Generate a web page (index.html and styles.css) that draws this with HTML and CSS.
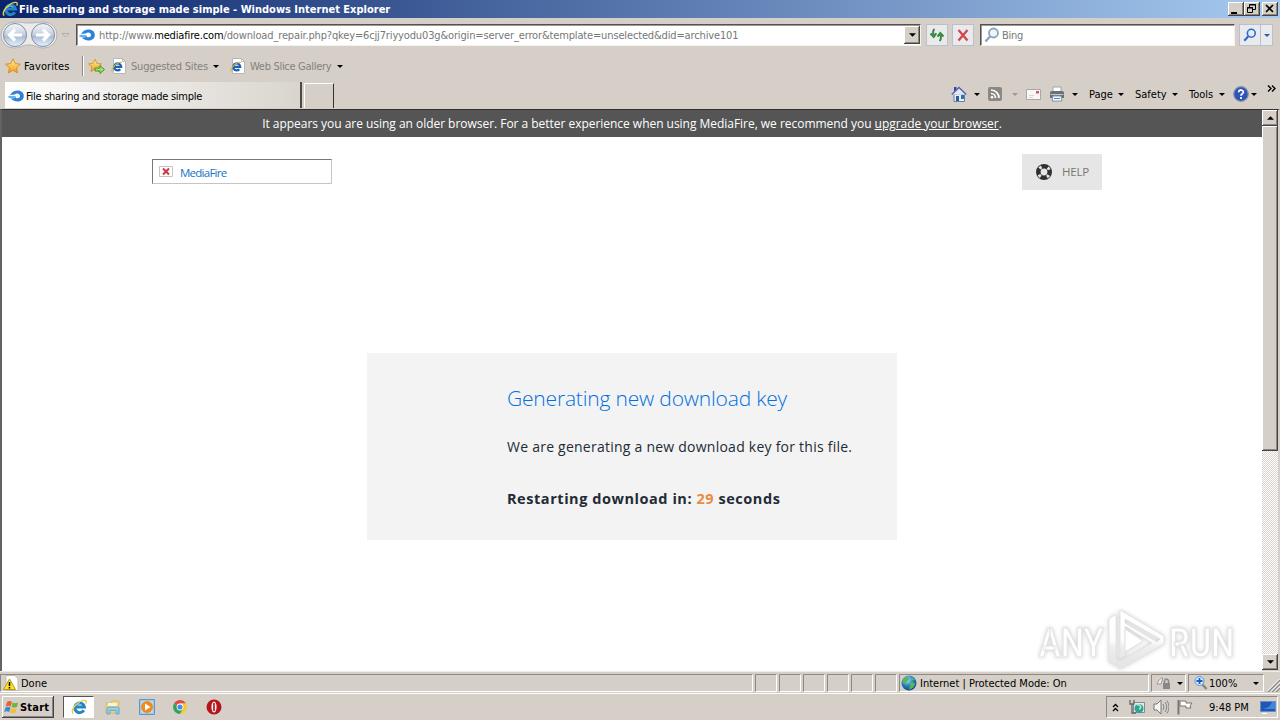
FILE: index.html
```html
<!DOCTYPE html>
<html lang="en">
<head>
  <meta charset="UTF-8">
  <title>File sharing and storage made simple</title>
  <link rel="stylesheet" href="styles.css">
</head>
<body>
  <svg class="defs" width="0" height="0">
    <defs>
      <linearGradient id="orb" x1="0" y1="0" x2="0" y2="1"><stop offset="0" stop-color="#f4f7fa"/><stop offset=".5" stop-color="#c3cfde"/><stop offset=".55" stop-color="#a9bcd2"/><stop offset="1" stop-color="#e6f3fb"/></linearGradient>
      <linearGradient id="gold" x1="0" y1="0" x2="0" y2="1"><stop offset="0" stop-color="#fff2a0"/><stop offset="1" stop-color="#f39a12"/></linearGradient>
      <linearGradient id="mark" gradientUnits="userSpaceOnUse" x1="0" y1="18" x2="0" y2="56"><stop offset="0" stop-color="#fff"/><stop offset=".45" stop-color="#fcfcfc"/><stop offset=".6" stop-color="#eee"/><stop offset="1" stop-color="#e6e6e6"/></linearGradient>
      <radialGradient id="globe" cx=".4" cy=".3" r=".8"><stop offset="0" stop-color="#a8dcf4"/><stop offset=".5" stop-color="#287ec0"/><stop offset="1" stop-color="#123a78"/></radialGradient>
      <symbol id="ie" viewBox="0 0 16 16"><path d="M12.800 11.300a4.800 4.800 0 1 1 .6-3.300H4.500" fill="none" stroke="#2485c6" stroke-width="3"/><path d="M5 6.300q3-3 6 0" fill="none" stroke="#7cc8ee"/><path d="M2.200 14.600C-1.500 11.500 7 1.300 14 1.400c1.700.1 1.500 1.800.7 3.200" fill="none" stroke="#e6cc52" stroke-width="1.400"/></symbol>
      <symbol id="mf" viewBox="0 0 16 12"><path d="M.5 7C3 6.500 5.500 7.500 8 7.500" fill="none" stroke="#62b2ee" stroke-width="2.200"/><path d="M2 4.800C4 2 6.500.500 9.800.500c3.500 0 6 2.300 6 5.500s-2.500 5.500-6 5.500C6.500 11.500 4 10 2.500 8.200c2 .6 3.700.2 5.200-.5C9.700 9 12 8 12 6s-2-3.200-4-2.300C6.500 5 4 4.500 2 4.800z" fill="#2c82d6"/></symbol>
      <symbol id="star" viewBox="0 0 16 16"><path d="M8 .8l2.200 4.800 5.200.6-3.900 3.500 1.100 5.200L8 12.300l-4.600 2.600 1.100-5.200L.6 6.200l5.200-.6z" fill="url(#gold)" stroke="#d88a1a" stroke-width=".9"/></symbol>
      <symbol id="iedoc" viewBox="0 0 16 16"><path d="M2.500 .5h9l3 3v12h-12z" fill="#fff" stroke="#b5b9bf"/><path d="M11.500 .5v3h3" fill="none" stroke="#b5b9bf"/><path d="M9.300 11.300a3.500 3.500 0 1 1 .9-2.500H3.500" fill="none" stroke="#1d62b2" stroke-width="2.200"/><path d="M1 13.500C0 10 7 3 11 4.500" fill="none" stroke="#d9b643" stroke-width="1.100"/></symbol>
      <symbol id="down" viewBox="0 0 6 3"><path d="M0 0h6L3 3z" fill="currentColor"/></symbol>
      <symbol id="glass" viewBox="0 0 16 16"><circle cx="9.500" cy="6" r="4.500" fill="#dcecf8" fill-opacity=".6" stroke="currentColor" stroke-width="1.800"/><path d="M6.200 9.300L1.500 14.500" stroke="currentColor" stroke-width="2.400"/></symbol>
    </defs>
  </svg>

  <div class="window">
    <header class="titlebar">
      <svg class="i16"><use href="#ie"/></svg>
      <span class="title">File sharing and storage made simple - Windows Internet Explorer</span>
      <div class="winbuttons">
        <svg width="16" height="14" class="raised"><path d="M3 10h6v2H3z"/></svg>
        <svg width="16" height="14" class="raised"><path d="M5.500 5V2.500h6v5H9M5 3h7M3 6h6" fill="none" stroke="#000"/><path d="M3.500 5.500h5v5h-5z" fill="none" stroke="#000"/></svg>
        <svg width="16" height="14" class="raised close"><path d="M4 3l7 7M11 3l-7 7" stroke="#000" stroke-width="1.700"/></svg>
      </div>
    </header>

    <div class="address-row">
      <svg class="nav" width="74" height="28" viewBox="0 0 74 28">
        <path d="M14 1c8 0 8 1 15 1s8-1 15-1a13 13 0 0 1 0 26c-7 0-8-3-15-3s-8 3-15 3a13 13 0 0 1 0-26z" fill="#eceaea" stroke="#b3b1b5"/>
        <circle cx="15" cy="14" r="11.500" fill="url(#orb)" stroke="#7f8da3"/>
        <circle cx="43" cy="14" r="11.500" fill="url(#orb)" stroke="#7f8da3"/>
        <path d="M22 14H10M15 8.500L9.500 14l5.500 5.500" fill="none" stroke="#fff" stroke-width="3.200"/>
        <path d="M36 14H48M43 8.500l5.500 5.500-5.500 5.500" fill="none" stroke="#fff" stroke-width="3.200"/>
        <path d="M62 12.500h7l-3.500 3.500z" fill="#d9d6d0" stroke="#a5a29d" stroke-width=".8"/>
      </svg>
      <div class="field address">
        <svg width="16" height="12"><use href="#mf"/></svg>
        <span class="url">http://www.<b>mediafire.com</b>/download_repair.php?qkey=6cjj7riyyodu03g&amp;origin=server_error&amp;template=unselected&amp;did=archive101</span>
        <span class="raised drop"><svg width="7" height="4"><use href="#down"/></svg></span>
      </div>
      <div class="flat refresh"><svg width="16" height="16"><path d="M5.500 2C3.500 3.500 4 6 4.500 8M1.500 6.500l3.200 3.500 2.600-3.700M10.500 14c2-1.500 1.500-4 1-6M8.500 9.700L11.300 6l3.200 3.500" fill="none" stroke="#36883c" stroke-width="2"/></svg></div>
      <div class="flat stop"><svg width="16" height="16"><path d="M3.500 3l9 10.500M12.500 3l-9 10.500" stroke="#d4474b" stroke-width="2.300"/></svg></div>
      <div class="field search">
        <svg class="i16 pale"><use href="#glass"/></svg>
        <span>Bing</span>
      </div>
      <div class="flat go"><svg width="14" height="14"><use href="#glass"/></svg></div>
      <div class="flat more"><svg width="6" height="3"><use href="#down"/></svg></div>
    </div>

    <div class="fav-row">
      <svg class="i16"><use href="#star"/></svg>
      <span class="fav-label">Favorites</span>
      <i class="sep"></i>
      <svg width="17" height="17" viewBox="0 0 17 17"><use href="#star" width="14" height="15"/><path d="M7 10h5V7.500l4.500 4-4.500 4V13H7z" fill="#a4dd63" stroke="#3a9a2c"/></svg>
      <svg class="i16 doc"><use href="#iedoc"/></svg>
      <span class="muted suggested">Suggested Sites</span>
      <svg class="arr"><use href="#down"/></svg>
      <svg class="i16 doc2"><use href="#iedoc"/></svg>
      <span class="muted slice">Web Slice Gallery</span>
      <svg class="arr"><use href="#down"/></svg>
    </div>

    <div class="tab-row">
      <div class="tab">
        <svg width="16" height="12"><use href="#mf"/></svg>
        <span>File sharing and storage made simple</span>
      </div>
      <div class="newtab"></div>
      <div class="commands">
        <svg class="i16"><path d="M3 1h2.500v5H3z" fill="#38459a"/><path d="M3 8h10.500v7.500H3z" fill="#e8eef8" stroke="#6b7fae"/><path d="M.8 8.500L8 1.500l7.200 7" fill="#e4e7f2" stroke="#4c64ad" stroke-width="1.400"/><path d="M5 10h3v5H5z" fill="#31579a"/><path d="M10 9h3v4h-3z" fill="#2b72b0"/></svg>
        <svg class="arr home-arr"><use href="#down"/></svg>
        <svg width="14" height="14" class="rss"><rect width="14" height="14" rx="2" fill="#8b8884"/><path d="M3 3a8 8 0 0 1 8 8M3 6.500A4.500 4.500 0 0 1 7.500 11" fill="none" stroke="#fff" stroke-width="1.700"/><circle cx="4" cy="10.200" r="1.300" fill="#fff"/></svg>
        <svg class="arr pale-arr"><use href="#down"/></svg>
        <svg width="15" height="11" class="mail"><path d="M.5.500h14v10H.5z" fill="#faf8f6" stroke="#aaa6a6"/><path d="M3 6.500h5M3 8.500h4" stroke="#d8d3d6"/><path d="M10 2h3v2.500h-3z" fill="#d85468"/></svg>
        <svg class="i16 printer"><path d="M4 1h8v5H4z" fill="#fff" stroke="#a0a6ad"/><path d="M1 6.500q0-1.500 2-1.500h10q2 0 2 1.500V12H1z" fill="#6b7075"/><path d="M1.500 8.500h13" stroke="#c2c7cc"/><path d="M4 10h8l1 5H3z" fill="#f5faff" stroke="#8094aa"/><path d="M5 12.500h6" stroke="#4e87bd"/></svg>
        <svg class="arr print-arr"><use href="#down"/></svg>
        <span class="c-page">Page</span><svg class="arr"><use href="#down"/></svg>
        <span class="c-safety">Safety</span><svg class="arr"><use href="#down"/></svg>
        <span class="c-tools">Tools</span><svg class="arr"><use href="#down"/></svg>
        <svg class="i16 help-ic"><circle cx="8" cy="8" r="7.300" fill="#2f54b8" stroke="#8792b0" stroke-width="1.200"/><path d="M5.700 6.200c0-3 4.800-2.800 4.600 0C10.200 7.800 8 7.700 8 9.800M8 11v2" fill="none" stroke="#fff" stroke-width="1.800"/></svg>
        <svg class="arr help-arr"><use href="#down"/></svg>
        <svg class="chev" width="9" height="7"><path d="M1 .5l3 3-3 3M5 .5l3 3-3 3" fill="none" stroke="#000" stroke-width="1.400"/></svg>
      </div>
    </div>

    <div class="viewport">
      <main class="page">
        <div class="notice"><span>It appears you are using an older browser. For a better experience when using MediaFire, we recommend you <a>upgrade your browser</a>.</span></div>
        <div class="page-head">
          <div class="logo">
            <svg width="14" height="11"><path d="M.5.500h13v10H.5z" fill="#fff" stroke="#c4c4c4"/><path d="M4 2.500l6 6M10 2.500l-6 6" stroke="#c9383c" stroke-width="2"/></svg>
            <a>MediaFire</a>
          </div>
          <div class="help">
            <svg width="18" height="18" viewBox="0 0 18 18"><circle cx="9" cy="9" r="5.700" fill="none" stroke="#303030" stroke-width="4.600"/><circle cx="9" cy="9" r="5.700" fill="none" stroke="#e6e6e6" stroke-width="3" stroke-dasharray="2.500 6.453" stroke-dashoffset="-3.226"/></svg>
            <span>HELP</span>
          </div>
        </div>
        <section class="card">
          <h1>Generating new download key</h1>
          <p class="info">We are generating a new download key for this file.</p>
          <p class="count">Restarting download in: <em>29</em> seconds</p>
        </section>
        <svg class="watermark" width="204" height="66" viewBox="0 0 204 66">
          <g fill="url(#mark)" stroke="#e4e4e4">
            <text transform="translate(3 51) scale(.8 1)">ANY</text>
            <text transform="translate(133 51) scale(.8 1)">RUN</text>
            <path d="M73 13l7-5v45l8 3-4 5-11-5z"/>
            <path fill-rule="evenodd" d="M84 4l44 26v8L84 63l-5-5 37-21-27-17v30l-5 3zM89 13v4l32 19 3-3z"/>
            <path d="M89 23l18 12-18 11z" fill="#fff"/>
          </g>
        </svg>
      </main>
      <div class="scrollbar">
        <span class="raised sb"><svg width="7" height="4" class="flip"><use href="#down"/></svg></span>
        <span class="raised thumb"></span>
        <span class="track"></span>
        <span class="raised sb"><svg width="7" height="4"><use href="#down"/></svg></span>
      </div>
    </div>

    <div class="statusbar">
      <div class="cell done">
        <svg class="i16"><path d="M3 .5h9l3 3v12H3z" fill="#fff" stroke="#bbb"/><path d="M6.500 4L12.500 14.500H.500z" fill="#ffe02b" stroke="#b89a0c"/><path d="M6.500 7v4M6.500 12v1.500" stroke="#000" stroke-width="1.500"/></svg>
        <span>Done</span>
      </div>
      <div class="cell blank"></div><div class="cell blank"></div><div class="cell blank"></div>
      <div class="cell blank"></div><div class="cell blank"></div><div class="cell blank"></div>
      <div class="cell zone">
        <svg class="i16"><circle cx="8" cy="8" r="7.500" fill="url(#globe)"/><path d="M3 3c3-2 5-1 5 1S5 6 5 8s-2 1-3 0 0-4 1-5zM9 8c3-2 5 0 5 1s-2 4-4 5-2-1-1-3-1-2 0-3zM11 2l3 3-3 0z" fill="#55b857"/></svg>
        <span>Internet | Protected Mode: On</span>
      </div>
      <div class="cell lock">
        <svg class="i16"><path d="M1 9c2-5 4-6 6-6l-2 6z" fill="#eee" stroke="#999"/><path d="M7 8h7v6H7z" fill="#888"/><path d="M8.500 8V5.500q2-3 4 0V8" fill="none" stroke="#888" stroke-width="1.500"/></svg>
        <svg class="arr"><use href="#down"/></svg>
      </div>
      <div class="cell zoom">
        <svg width="14" height="14" viewBox="0 0 14 14"><path d="M8 8l4.500 5" stroke="#8c8580" stroke-width="2.500"/><circle cx="5.500" cy="5" r="4.500" fill="#d6eafb" stroke="#5b95d4"/><path d="M5.500 2v6M2.500 5h6" stroke="#1a61bd" stroke-width="1.800"/></svg>
        <span>100%</span>
        <svg class="arr"><use href="#down"/></svg>
      </div>
      <svg class="grip" width="13" height="13"><path d="M1 13L13 1M5 13l8-8M9 13l4-4" stroke="#888" stroke-width="1.500"/><path d="M0 12.500L12.500 0M4 12.500l9-9M8 12.500l5-5" stroke="#fff"/></svg>
    </div>

    <footer class="taskbar">
      <div class="raised start">
        <svg class="i16"><path d="M3 3c2-1.500 3.500-1 5 0L6.700 7.500c-2-1-3-1-5 0z" fill="#e8642c"/><path d="M8.800 3.500c2 1 3.500 1 5.500-.2L13 7.700c-2 1.100-3.500 1.100-5.400.2z" fill="#70b53c"/><path d="M1.500 8.700c2-1.200 3.200-1 5 0L5.200 13C3.400 12 2 12.200.2 13z" fill="#3f86d4"/><path d="M7.400 9.200c2 1 3.300.9 5.300 0L11.300 13.500c-2 1.100-3.400.9-5.200 0z" fill="#f6bd2d"/></svg>
        <span>Start</span>
      </div>
      <div class="task active"><svg class="i16"><use href="#ie"/></svg></div>
      <svg class="i16 t-folder"><path d="M1 4h5l1-2h7v12H1z" fill="#f1d47a" stroke="#d1b65e" stroke-width=".8"/><path d="M3 4h9v3H3z" fill="#faf4cd"/><path d="M2 14V9.500q0-1.500 2-1.500h8q2 0 2 1.500V15h-3v-3.500H5V15H2z" fill="#91cbed" stroke="#5599c4" stroke-width=".7"/></svg>
      <svg class="i16 t-media"><path d="M.5.500h15v15H.5z" fill="#9ccaf0" stroke="#5898ce"/><path d="M2.500 2.500h11v11h-11z" fill="#d9e8f2"/><circle cx="8" cy="8" r="6" fill="#ef8a1c"/><path d="M6 4.500L11.500 8 6 11.500z" fill="#fff"/></svg>
      <svg class="t-chrome" width="14" height="14" viewBox="0 0 14 14"><path d="M7 7L1 3.500A7 7 0 0 1 13 3.500H7z" fill="#df4b3d"/><path d="M7 7L1 3.500A7 7 0 0 0 7 14l3-5z" fill="#34a257"/><path d="M7 3.500h6A7 7 0 0 1 7 14l3-5z" fill="#f6c92d"/><circle cx="7" cy="7" r="3.400" fill="#fff"/><circle cx="7" cy="7" r="2.600" fill="#4b8ae8"/></svg>
      <svg class="i16 t-opera"><circle cx="8" cy="8" r="7.500" fill="#b5141b"/><ellipse cx="8" cy="8" rx="2.600" ry="5.500" fill="#f9eded"/><path d="M8 4v8" stroke="#ab1118" stroke-width="1.600"/></svg>
      <div class="tray">
        <svg width="7" height="9"><path d="M1 4l2.500-2.500L6 4M1 8l2.500-2.500L6 8" fill="none" stroke="#000" stroke-width="1.300"/></svg>
        <svg class="i16 net"><path d="M4.500 3.500h11v10h-11z" fill="#d9f0ee" stroke="#889"/><circle cx="10" cy="9.500" r="4.500" fill="#2fa293"/><path d="M8 6c4-1 5 3 2 4" fill="none" stroke="#bfeac8" stroke-width="1.500"/><path d="M1 1v4h4V1M3 5v9h4" fill="none" stroke="#666" stroke-width="1.300"/></svg>
        <svg class="i16 vol"><path d="M1 5h3l4-4v14l-4-4H1z" fill="#f5f5f5" stroke="#777"/><path d="M10 5q2 3 0 6M12 3q3.500 5 0 10M14 1.500q4 6.500 0 13" fill="none" stroke="#868686"/></svg>
        <svg class="i16 flag"><path d="M1.500 1v14.500" stroke="#777" stroke-width="2"/><path d="M3 2h6v2h6l-2 3 1 2H9V7H3z" fill="#fff" stroke="#777"/></svg>
        <span class="clock">9:48 PM</span>
        <svg width="16" height="14" class="desk"><path d="M.5 1.500h15v10H.5z" fill="#1d58b4" stroke="#6b8dbd"/><path d="M1 9C6 9 10 7 12 2h3v7z" fill="#3d86db"/><path d="M2 13.500h5" stroke="#fff"/></svg>
      </div>
    </footer>
  </div>
</body>
</html>
```

FILE: styles.css
```css
* { margin: 0; padding: 0; box-sizing: border-box; }
body {
  background: #d5cfc7;
  overflow: hidden;
  font: 11px/14px "DejaVu Sans Condensed", "DejaVu Sans", sans-serif;
  font-stretch: condensed;
  color: #000;
}
svg { display: block; flex: none; }
span { white-space: nowrap; }
.defs { position: absolute; }
.i16 { width: 16px; height: 16px; }
.arr { width: 6px; height: 3px; }

.window { width: 1280px; height: 720px; display: flex; flex-direction: column; }
.raised {
  background: #d5cfc7;
  box-shadow: inset -1px -1px #444, inset 1px 1px #fff, inset -2px -2px #8a8680;
}

/* title bar */
.titlebar {
  height: 18px; display: flex; align-items: center; padding: 0 2px;
  background: linear-gradient(90deg, #0a246a, #a6caf0);
  color: #fff; font-weight: bold;
}
.title { margin-left: 1px; padding-top: 1px; }
.winbuttons { margin-left: auto; display: flex; }
.winbuttons .close { margin-left: 2px; }

/* address row */
.address-row { height: 34px; display: flex; align-items: flex-start; padding-top: 6px; }
.nav { margin: -3px 2px 0 0; }
.field {
  height: 22px; display: flex; align-items: center; background: #fff;
  border: 1px solid #55514c; border-right-color: #f4f2ee; border-bottom-color: #f4f2ee;
  box-shadow: inset 1px 1px #999;
  color: #777;
}
.address { width: 845px; padding-left: 2px; }
.url { margin-left: 4px; padding-top: 1px; letter-spacing: -0.145px; }
.url b { font-weight: normal; color: #000; }
.drop { width: 16px; height: 18px; margin-left: auto; display: flex; align-items: center; justify-content: center; color: #000; }
.flat {
  height: 22px; display: flex; align-items: center; justify-content: center;
  background: #e9eaec; border: 1px solid #b8c0cf;
}
.refresh { width: 22px; margin-left: 5px; }
.stop { width: 22px; margin-left: 4px; }
.search { width: 255px; margin-left: 6px; padding-left: 3px; gap: 2px; }
.search span { padding-top: 2px; letter-spacing: -0.3px; }
.pale { color: #8da4bc; }
.go { width: 22px; margin-left: 4px; color: #2c66cc; }
.more { width: 13px; margin-left: -1px; color: #2c5cb4; }

/* favorites */
.fav-row { height: 28px; display: flex; align-items: center; padding-left: 5px; }
.fav-label { width: 58px; margin-left: 3px; padding-top: 1px; letter-spacing: 0.1px; }
.sep { width: 2px; height: 20px; margin-right: 4px; background: #8f8b85; border-right: 1px solid #fff; }
.muted { color: #85817c; padding-top: 2px; letter-spacing: -0.2px; }
.doc { margin-left: 6px; }
.suggested { width: 82px; margin-left: 4px; }
.doc2 { margin-left: 11px; }
.slice { width: 87px; margin-left: 4px; letter-spacing: -0.3px; }

/* tabs and command bar */
.tab-row { height: 29px; display: flex; align-items: flex-end; padding: 0 0 1px 5px; }
.tab {
  width: 297px; height: 26px; display: flex; align-items: center; gap: 2px; padding-left: 3px;
  background: linear-gradient(90deg, #fff, #d9d5ce);
  border-right: 2px solid #4d4a46;
}
.tab svg { margin-top: 2px; }
.tab span { padding-top: 3px; letter-spacing: -0.28px; }
.newtab { width: 30px; height: 25px; margin-left: 2px; border: 1px solid #fff; border-right: 1px solid #333; border-bottom: 0; }
.commands { height: 28px; display: flex; align-items: center; margin-left: 617px; }
.commands span { padding-top: 1px; }
.home-arr { margin-left: 7px; }
.rss { margin-left: 8px; }
.pale-arr { margin-left: 10px; color: #9c9893; }
.mail { margin-left: 8px; }
.printer { margin-left: 8px; }
.print-arr { margin-left: 7px; }
.c-page { width: 29px; margin-left: 11px; }
.c-safety { width: 37px; margin-left: 11px; }
.c-tools { width: 30px; margin-left: 11px; }
.help-ic { margin-left: 8px; }
.help-arr { margin-left: 2px; }
.chev { margin: -12px 0 0 10px; }

/* page area */
.viewport {
  height: 562px; display: flex;
  border-top: 1px solid #33302e; border-left: 2px solid #66625e; border-right: 2px solid #d5cfc7;
}
.page {
  position: relative; width: 1260px; height: 561px; background: #fff;
  display: flex; flex-direction: column;
  font-family: "Open Sans", sans-serif; font-stretch: normal;
}
.page a { color: #1673c8; }
.notice {
  height: 27px; background: #555; color: #fff; text-align: center;
  font-size: 12px; line-height: 28px; letter-spacing: -0.03px;
}
.notice a { color: #fff; text-decoration: underline; }
.page-head { display: flex; justify-content: space-between; padding: 17px 160px 0 150px; }
.logo {
  width: 180px; height: 25px; margin-top: 5px; display: flex; align-items: center;
  border: 1px solid #c5c5c5; border-top-color: #777; border-left-color: #777;
  padding-left: 6px; gap: 7px; font-size: 11.5px; letter-spacing: -0.75px;
}
.logo a { padding-top: 2px; }
.help {
  width: 80px; height: 36px; display: flex; align-items: center; gap: 9px; padding-left: 13px;
  background: #e6e6e6; color: #777; font-size: 11.5px; letter-spacing: -0.2px;
}
.card {
  width: 530px; height: 187px; margin: 163px 0 0 365px; padding: 31px 0 0 140px;
  background: #f3f3f3; color: #222b35;
}
.card h1 { font-size: 21px; line-height: 28px; font-weight: 300; letter-spacing: -0.18px; color: #0070e0; white-space: nowrap; }
.info { margin-top: 25px; font-size: 14px; line-height: 20px; letter-spacing: 0.24px; white-space: nowrap; }
.count { margin-top: 32px; font-size: 14.5px; line-height: 20px; letter-spacing: 0.55px; font-weight: bold; }
.count em { font-style: normal; color: #ec8a42; }
.watermark {
  position: absolute; left: 1034px; top: 496px; overflow: visible;
  font: 500 41px Roboto, sans-serif;
  filter: drop-shadow(0 0 2px #ccc);
}

/* scrollbar */
.scrollbar { width: 16px; height: 560px; display: flex; flex-direction: column; }
.sb { height: 16px; display: flex; align-items: center; justify-content: center; }
.flip { transform: rotate(180deg); }
.thumb { height: 325px; }
.track { flex: 1; background: repeating-conic-gradient(#fff 0 25%, #d9d4cd 0 50%) 0 0 / 2px 2px; }

/* status bar */
.statusbar { height: 22px; display: flex; align-items: flex-start; gap: 2px; padding-top: 2px; border-top: 1px solid #eeebe6; }
.cell {
  height: 18px; display: flex; align-items: center;
  border: 1px solid #8d8983; border-right-color: #fff; border-bottom-color: #fff;
}
.cell span { padding-top: 1px; }
.done { width: 753px; padding-left: 2px; gap: 2px; }
.blank { width: 22px; }
.zone { width: 250px; padding-left: 1px; gap: 3px; }
.lock { width: 35px; padding-left: 4px; gap: 5px; }
.zoom { width: 76px; padding-left: 5px; gap: 1px; }
.zoom span { width: 43px; }
.grip { margin: 5px 0 0 1px; }

/* taskbar */
.taskbar { flex: 1; display: flex; align-items: center; border-top: 1px solid #fff; padding: 0 2px; }
.start { width: 52px; height: 22px; display: flex; align-items: center; padding-left: 2px; font-weight: bold; }
.start span { padding-top: 1px; letter-spacing: 0.2px; }
.task { width: 31px; height: 22px; margin-left: 9px; display: flex; align-items: center; justify-content: center; }
.active { background: #fff; border: 1px solid #555; border-right-color: #fff; border-bottom-color: #fff; }
.t-folder { margin-left: 11px; }
.t-media { margin-left: 18px; }
.t-chrome { margin-left: 18px; }
.t-opera { margin-left: 19px; }
.tray {
  width: 172px; height: 22px; margin-left: auto; display: flex; align-items: center; padding-left: 5px;
  border: 1px solid #8d8983; border-right-color: #fff; border-bottom-color: #fff;
}
.net { margin-left: 10px; }
.vol { margin-left: 8px; }
.flag { margin-left: 8px; }
.clock { width: 51px; margin-left: 16px; padding-top: 1px; }
```
